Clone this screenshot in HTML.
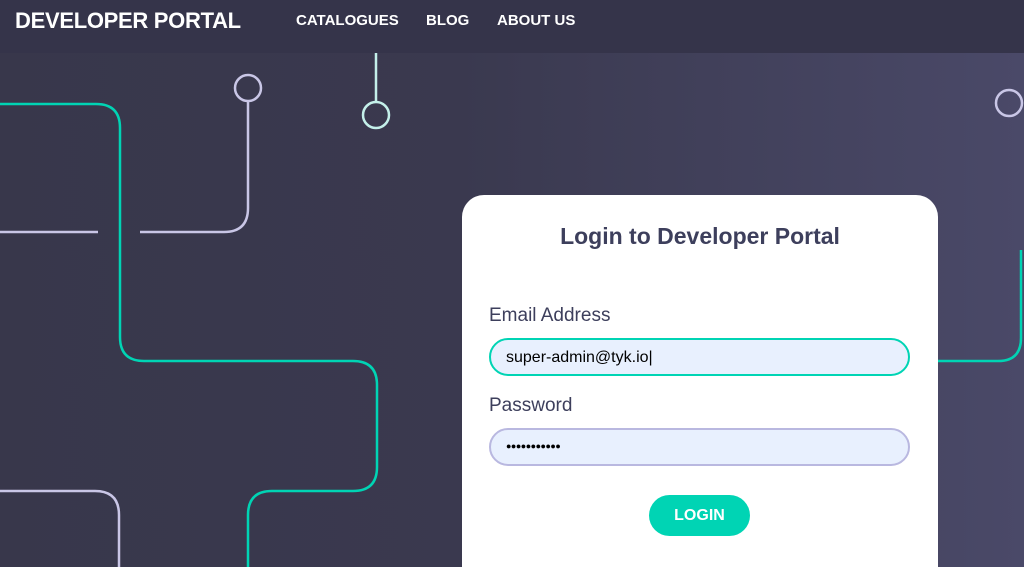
<!DOCTYPE html>
<html><head><meta charset="utf-8"><style>
*{margin:0;padding:0;box-sizing:border-box}
html,body{width:1024px;height:567px;overflow:hidden}
body{font-family:"Liberation Sans",sans-serif;background:linear-gradient(90deg,#38374b 0%,#3a394f 45%,#4a4968 100%);position:relative}
.hdr{position:absolute;left:0;top:0;width:1024px;height:53px;background:#35344a}
.hdr .t{position:absolute;left:15px;top:8px;font-size:22px;font-weight:bold;color:#fff;letter-spacing:-0.3px}
.hdr .n{position:absolute;top:12px;font-size:15px;font-weight:bold;color:#fff}
svg{position:absolute;left:0;top:0}
.card{position:absolute;left:462px;top:195px;width:476px;height:372px;background:#fff;border-radius:22px 22px 0 0}
.card h1{position:absolute;left:0;width:476px;top:28px;text-align:center;font-size:23px;color:#3d3f5c;font-weight:bold}
.lbl{position:absolute;left:27px;font-size:19px;color:#3d3f5c}
.in{position:absolute;left:27px;width:421px;height:38px;border-radius:19px;background:#e8f0fe;font-size:16px;color:#000;padding:9px 0 0 15px}
.btn{position:absolute;left:187px;top:300px;width:101px;height:41px;border-radius:21px;background:#00d4b4;color:#fff;font-weight:bold;font-size:16px;text-align:center;line-height:41px}
</style></head><body>
<svg width="1024" height="567" fill="none" stroke-width="2.5">
<path d="M0 104 H96 Q120 104 120 128 V337 Q120 361 144 361 H353 Q377 361 377 385 V467 Q377 491 353 491 H272 Q248 491 248 515 V567" stroke="#00d4b4"/>
<path d="M938 361 H998 Q1021 361 1021 338 V250" stroke="#00d4b4"/>
<path d="M248 101 V208 Q248 232 224 232 H140 M0 232 H98" stroke="#c9c6e6"/>
<circle cx="248" cy="88" r="13" stroke="#c9c6e6"/>
<path d="M0 491 H95 Q119 491 119 515 V567" stroke="#c9c6e6"/>
<circle cx="1009" cy="103" r="13" stroke="#c9c6e6"/>
<path d="M376 53 V102" stroke="#c4f0ea"/>
<circle cx="376" cy="115" r="13" stroke="#c4f0ea"/>
</svg>
<div class="hdr"><div class="t">DEVELOPER PORTAL</div>
<div class="n" style="left:296px">CATALOGUES</div><div class="n" style="left:426px">BLOG</div><div class="n" style="left:497px">ABOUT US</div></div>
<div class="card">
<h1>Login to Developer Portal</h1>
<div class="lbl" style="top:110px">Email Address</div>
<div class="in" style="top:143px;border:2px solid #00d4b4">super-admin@tyk.io|</div>
<div class="lbl" style="top:200px">Password</div>
<div class="in" style="top:233px;border:2px solid #b9b8e0;font-size:9px;padding-top:11px;letter-spacing:-0.5px">●●●●●●●●●●●</div>
<div class="btn">LOGIN</div>
</div>
</body></html>
